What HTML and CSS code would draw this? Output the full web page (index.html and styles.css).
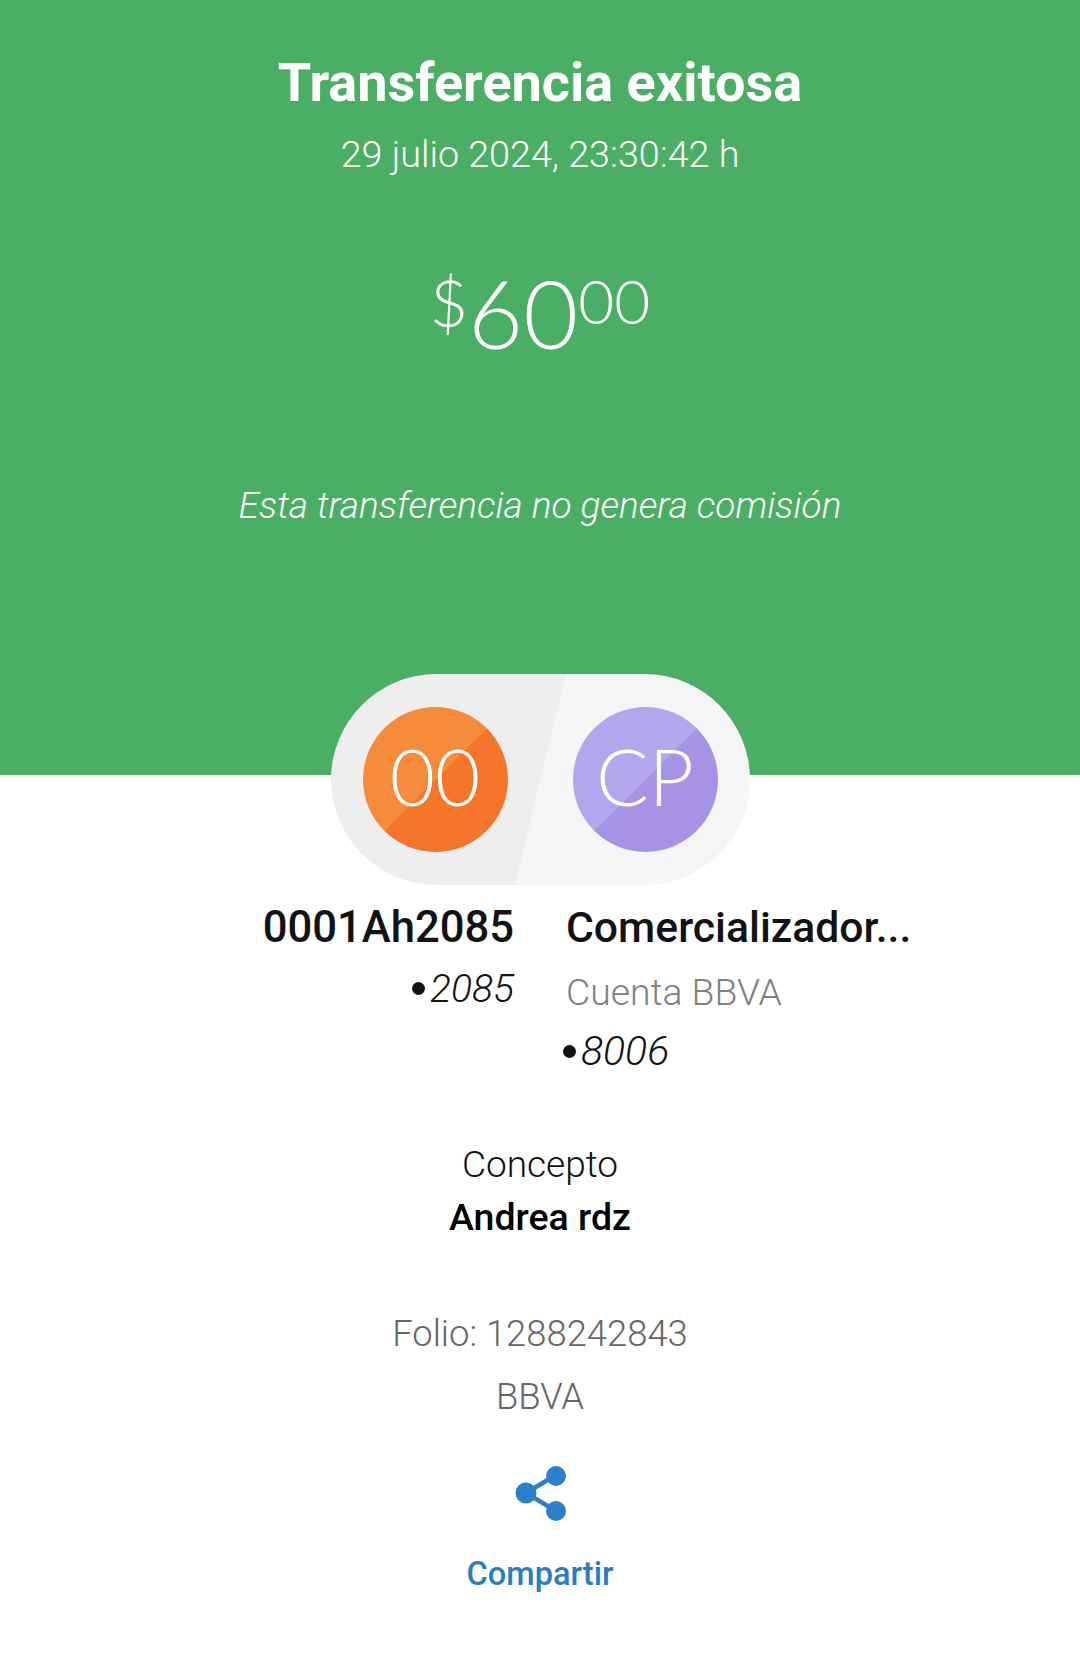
FILE: index.html
```html
<!DOCTYPE html>
<html>
<head>
    <title>Transferencia exitosa</title>
    <link rel="stylesheet" href="styles.css">
</head>
<body>
<div class="hero">
    <div class="title">Transferencia exitosa</div>
    <div class="date">29 julio 2024, 23:30:42 h</div>
    <div class="amount"><span class="cur">$</span><span class="whole">60</span><span class="cents">00</span></div>
    <div class="note">Esta transferencia no genera comisión</div>
</div>

<div class="pill">
    <div class="avatar orange">00</div>
    <div class="avatar purple">CP</div>
</div>

<div class="accounts">
    <div class="account from">
        <div class="name">0001Ah2085</div>
        <div class="num"><span class="dot"></span>2085</div>
    </div>
    <div class="account to">
        <div class="name">Comercializador...</div>
        <div class="bank">Cuenta BBVA</div>
        <div class="num"><span class="dot"></span>8006</div>
    </div>
</div>

<div class="concept">
    <div class="concept-label">Concepto</div>
    <div class="concept-value">Andrea rdz</div>
</div>

<div class="meta">
    <div>Folio: 1288242843</div>
    <div>BBVA</div>
</div>

<div class="share">
    <svg class="share-icon" width="54" height="58" viewBox="0 0 54 58">
        <path d="M13 28 L43 10 M13 28 L43 46" stroke="#2b7fcb" stroke-width="4.5" fill="none"/>
        <circle cx="13" cy="28" r="10.5" fill="#2b7fcb"/>
        <circle cx="43" cy="11" r="10" fill="#2b7fcb"/>
        <circle cx="43" cy="46" r="10" fill="#2b7fcb"/>
    </svg>
    <div class="share-label">Compartir</div>
</div>
</body>
</html>
```
FILE: styles.css
```css
html, body {
margin: 0;
padding: 0;
}
body {
width: 1080px;
height: 1657px;
overflow: hidden;
background-color: #fff;
font-family: Roboto, "Liberation Sans", sans-serif;
color: #121212;
text-align: center;
}
.hero {
height: 775px;
box-sizing: border-box;
padding-top: 50px;
background-color: #4aae65;
color: #fff;
}
.title {
font-size: 54px;
line-height: 66px;
font-weight: 700;
}
.date {
margin-top: 17px;
font-size: 37.7px;
line-height: 42px;
font-weight: 300;
}
.amount {
margin-top: 82px;
height: 114px;
display: flex;
justify-content: center;
align-items: flex-start;
font-family: Lato, Roboto, sans-serif;
font-weight: 300;
}
.cur {
margin-top: 13px;
font-size: 66px;
line-height: 64px;
}
.whole {
font-size: 95px;
line-height: 110px;
}
.cents {
margin-top: 11px;
font-size: 62px;
line-height: 64px;
}
.note {
margin-top: 114px;
font-size: 37px;
line-height: 42px;
font-weight: 300;
font-style: italic;
}
.pill {
width: 419px;
height: 211px;
margin: -101px auto 0;
padding: 0 32px;
box-sizing: border-box;
display: flex;
align-items: center;
justify-content: space-between;
border-radius: 106px;
background: linear-gradient(103.6deg, #eeeeee 50%, #f5f5f5 50%);
}
.avatar {
width: 145px;
height: 145px;
border-radius: 50%;
color: #fff;
font-family: Lato, Roboto, sans-serif;
font-size: 78px;
line-height: 139px;
font-weight: 300;
}
.orange {
background: linear-gradient(135deg, #f68b3c 50%, #f5762a 50%);
}
.purple {
background: linear-gradient(135deg, #b3a6ec 50%, #a594e6 50%);
}
.accounts {
display: flex;
gap: 52px;
margin-top: 16px;
}
.account {
flex: 1;
}
.from {
text-align: right;
}
.to {
text-align: left;
}
.name {
font-size: 42.7px;
line-height: 52px;
font-weight: 500;
}
.from .name {
font-size: 43.6px;
padding-top: 1px;
margin-bottom: -1px;
}
.num {
margin-top: 12px;
font-size: 39px;
line-height: 48px;
font-weight: 300;
font-style: italic;
}
.dot {
display: inline-block;
width: 13px;
height: 13px;
margin-right: 5px;
border-radius: 50%;
background-color: #121212;
vertical-align: 7px;
}
.bank {
margin-top: 15px;
font-size: 37.3px;
line-height: 48px;
font-weight: 300;
color: #808080;
}
.to .num {
margin-top: 11px;
font-size: 41px;
}
.to .dot {
margin-left: -3px;
}
.concept {
margin-top: 64px;
}
.concept-label {
font-size: 37px;
line-height: 52px;
font-weight: 300;
}
.concept-value {
font-size: 37.5px;
line-height: 52px;
font-weight: 500;
color: #000;
}
.meta {
margin-top: 59px;
font-size: 36.4px;
line-height: 63px;
font-weight: 300;
color: #666;
}
.share {
margin-top: 37px;
}
.share-icon {
display: block;
margin: 0 auto;
}
.share-label {
margin-top: 31px;
font-size: 32.6px;
line-height: 40px;
font-weight: 500;
color: #2b7cc2;
}
```
